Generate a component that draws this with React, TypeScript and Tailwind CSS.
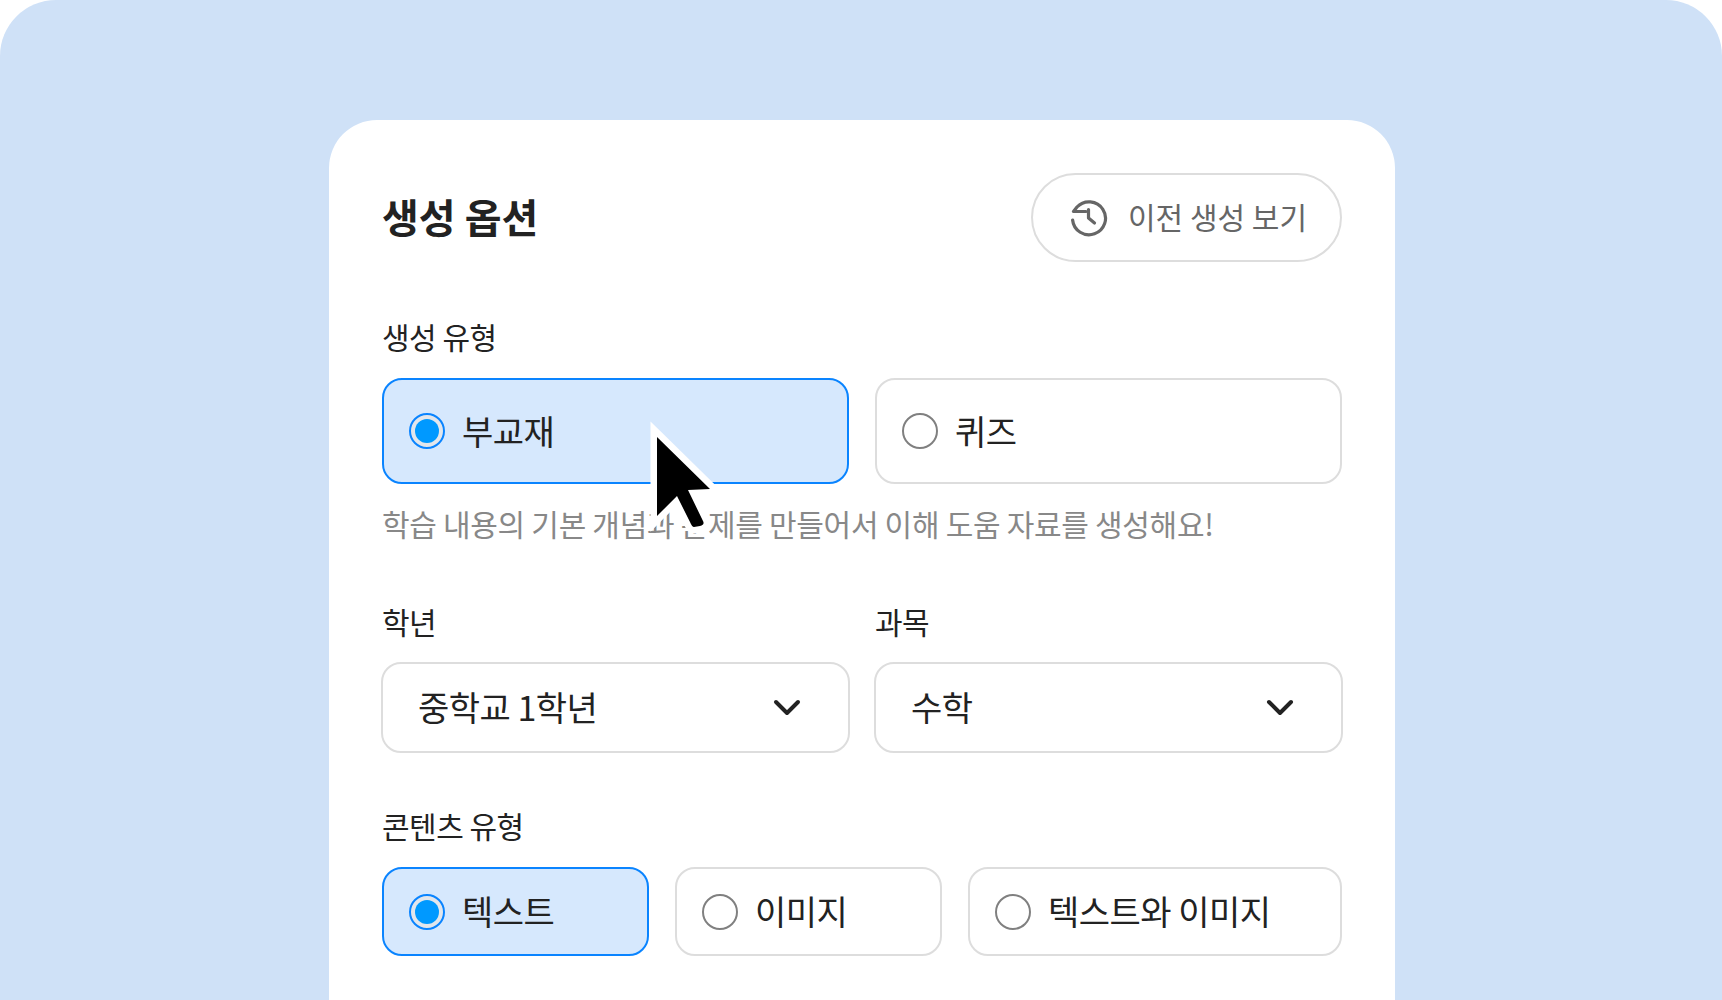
import React from 'react';

const fontStack = "font-['Noto_Sans_CJK_KR','Noto_Sans',sans-serif]";

const Radio: React.FC<{ checked?: boolean }> = ({ checked }) =>
    checked ? (
        <span className="flex h-[36px] w-[36px] shrink-0 items-center justify-center rounded-full border-2 border-[#0a84ff] bg-[#e2e6ec]">
            <span className="h-[24px] w-[24px] rounded-full bg-[#0099ff]" />
        </span>
    ) : (
        <span className="h-[36px] w-[36px] shrink-0 rounded-full border-2 border-[#808080] bg-white" />
    );

const Option: React.FC<{ label: string; checked?: boolean; className: string }> = ({ label, checked, className }) => (
    <div
        className={`flex items-center gap-[17px] rounded-[20px] border-2 px-[25px] text-[34px] tracking-[-0.5px] text-[#222222] ${
            checked ? 'border-[#0a84ff] bg-[#d6e8fd]' : 'border-[#dddddd] bg-white'
        } ${className}`}
    >
        <Radio checked={checked} />
        <span className="mb-[2px]">{label}</span>
    </div>
);

const Select: React.FC<{ value: string }> = ({ value }) => (
    <div className="flex h-[91px] flex-1 items-center justify-between rounded-[20px] border-2 border-[#dddddd] bg-white pl-[35px] pr-[47px] text-[34px] tracking-[-0.5px] text-[#222222]">
        <span className="mb-[2px]">{value}</span>
        <svg width="28" height="18" viewBox="0 0 28 18" fill="none" stroke="#222222" strokeWidth="4" strokeLinecap="round" strokeLinejoin="round">
            <path d="M3 3l11 11L25 3" />
        </svg>
    </div>
);

const Label: React.FC<{ children: React.ReactNode; className?: string }> = ({ children, className }) => (
    <p className={`text-[30px] leading-[40px] tracking-[-0.5px] text-[#222222] ${className ?? ''}`}>{children}</p>
);

const App: React.FC = () => (
    <div className={`h-[1000px] w-full overflow-hidden bg-white ${fontStack}`}>
        <div className="relative flex h-[1000px] justify-center overflow-hidden rounded-t-[56px] bg-[#cfe1f7] pl-[2px] pt-[120px]">
            <div className="h-[1000px] w-[1066px] shrink-0 rounded-t-[48px] bg-white px-[53px] pt-[53px]">
                <div className="flex items-center justify-between">
                    <h1 className="mb-[4px] text-[40px] font-bold leading-[50px] text-[#222222]">생성 옵션</h1>
                    <button className="flex h-[89px] w-[311px] items-center justify-center gap-[20px] rounded-full border-2 border-[#dddddd] bg-white pl-[4px] text-[30px] text-[#666666]">
                        <svg width="38" height="38" viewBox="0 0 38 38" fill="none" stroke="#666666" strokeWidth="3.2" strokeLinecap="round" strokeLinejoin="round">
                            <path d="M2.6 21A16.5 16.5 0 1 0 7 8L3.5 12.5H16" />
                            <path d="M18.5 10.5V19l6 5" />
                        </svg>
                        <span className="mb-[2px]">이전 생성 보기</span>
                    </button>
                </div>

                <Label className="mt-[54px]">생성 유형</Label>
                <div className="mt-[22px] flex gap-[26px]">
                    <Option label="부교재" checked className="h-[106px] flex-1" />
                    <Option label="퀴즈" className="h-[106px] flex-1" />
                </div>
                <p className="mt-[18px] text-[30px] leading-[42px] tracking-[-0.3px] text-[#888888]">
                    학습 내용의 기본 개념과 문제를 만들어서 이해 도움 자료를 생성해요!
                </p>

                <div className="mt-[57px] flex gap-[26px]">
                    <div className="flex-1">
                        <Label>학년</Label>
                        <div className="-mx-px mt-[21px] flex"><Select value="중학교 1학년" /></div>
                    </div>
                    <div className="flex-1">
                        <Label>과목</Label>
                        <div className="-mx-px mt-[21px] flex"><Select value="수학" /></div>
                    </div>
                </div>

                <Label className="mt-[52px]">콘텐츠 유형</Label>
                <div className="mt-[22px] flex gap-[26px]">
                    <Option label="텍스트" checked className="h-[89px] w-[267px]" />
                    <Option label="이미지" className="h-[89px] w-[267px]" />
                    <Option label="텍스트와 이미지" className="h-[89px] flex-1" />
                </div>
            </div>

            {/* mouse cursor over the first option */}
            <svg className="absolute left-[640px] top-[410px]" width="90" height="130" viewBox="0 0 90 130">
                <path
                    d="M17 27 L70 79 L48 80 L63 111 Q65 115 60 116 L54 117 Q52 117 50 112 L37 86 L17 106 Z"
                    fill="#000000"
                    stroke="#ffffff"
                    strokeWidth="13"
                    strokeLinejoin="miter"
                    strokeMiterlimit="6"
                    paintOrder="stroke"
                />
            </svg>
        </div>
    </div>
);

export default App;
